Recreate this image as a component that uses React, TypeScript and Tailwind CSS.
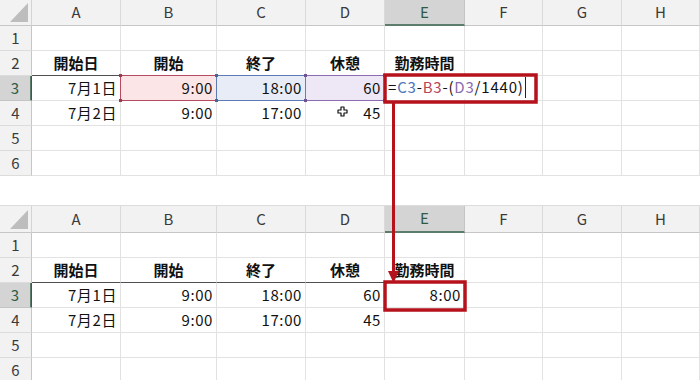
import React from "react";

const COLS = ["A", "B", "C", "D", "E", "F", "G", "H"];
const GRID = "grid grid-cols-[32px_89px_96px_89px_79px_80px_78px_79px_78px]";
const FONT = "font-['Noto_Sans_CJK_JP','Noto_Sans',sans-serif]";

type Ref = { fill: string; line: string };

// Excel-style formula reference colours
const REF_B: Ref = { fill: "bg-[#fbe5e6]", line: "border-[#b84a5f]" };
const REF_C: Ref = { fill: "bg-[#e7ecf7]", line: "border-[#5b7bb4]" };
const REF_D: Ref = { fill: "bg-[#eee8f6]", line: "border-[#8a6bb0]" };

function RefFrame({ line, dot }: { line: string; dot: string }) {
  return (
    <div className={`pointer-events-none absolute -left-px -top-px right-[-1px] bottom-[-1px] z-10 border ${line}`}>
      <span className={`absolute -left-[2px] -top-[2px] h-[3px] w-[3px] ${dot}`} />
      <span className={`absolute -right-[2px] -top-[2px] h-[3px] w-[3px] ${dot}`} />
      <span className={`absolute -left-[2px] -bottom-[2px] h-[3px] w-[3px] ${dot}`} />
      <span className={`absolute -right-[2px] -bottom-[2px] h-[3px] w-[3px] ${dot}`} />
    </div>
  );
}

function Corner() {
  return (
    <div className="relative border-b border-r border-b-[#c6c6c6] border-r-[#d4d4d4] bg-[#f2f2f2]">
      <svg className="absolute right-[2px] bottom-[2px]" width="19" height="20" viewBox="0 0 19 20">
        <polygon points="18,0 18,19 0,19" fill="#bdbdbd" />
      </svg>
    </div>
  );
}

function ColHeader({ label, active }: { label: string; active: boolean }) {
  return (
    <div
      className={`flex items-center justify-center border-r text-[15px] ${
        active
          ? "border-b-2 border-r-[#c4c4c4] border-b-[#5d7d6c] bg-[#d4d4d4] text-[#2e5a44]"
          : "border-b border-r-[#dadada] border-b-[#c6c6c6] bg-[#f2f2f2] text-[#3a3a3a]"
      }`}
    >
      {label}
    </div>
  );
}

function RowHeader({ n, active }: { n: number; active: boolean }) {
  return (
    <div
      className={`flex h-[25px] items-center justify-center border-b text-[15px] ${
        active
          ? "border-r-2 border-b-[#c4c4c4] border-r-[#5d7d6c] bg-[#d4d4d4] text-[#2e5a44]"
          : "border-r border-b-[#dcdcdc] border-r-[#c6c6c6] bg-[#f2f2f2] text-[#3a3a3a]"
      }`}
    >
      {n}
    </div>
  );
}

function Cell({
  children,
  align = "right",
  bold = false,
  darkBottom = false,
  extra = "",
}: {
  children?: React.ReactNode;
  align?: "left" | "center" | "right";
  bold?: boolean;
  darkBottom?: boolean;
  extra?: string;
}) {
  const just =
    align === "center" ? "justify-center" : align === "left" ? "justify-start pl-[3px]" : "justify-end pr-[3px]";
  return (
    <div
      className={`relative flex h-[25px] items-center whitespace-nowrap border-b border-r border-r-[#e2e2e2] text-[15px] text-[#111] ${just} ${
        darkBottom ? "border-b-[#505050]" : "border-b-[#e2e2e2]"
      } ${bold ? "font-bold" : "tracking-[0.6px]"} ${extra}`}
    >
      {children}
    </div>
  );
}

function Empty({ n }: { n: number }) {
  return (
    <>
      {Array.from({ length: n }).map((_, i) => (
        <Cell key={i} />
      ))}
    </>
  );
}

function Formula() {
  return (
    <div className="absolute left-0 top-0 bottom-px z-10 flex items-center bg-white pl-[3px] pr-[14px] text-[15px] tracking-[0.8px] text-[#111]">
      <span>=</span>
      <span className="text-[#4d74b8]">C3</span>
      <span>-</span>
      <span className="text-[#b8465a]">B3</span>
      <span>-(</span>
      <span className="text-[#8a6bb0]">D3</span>
      <span>/1440)</span>
      <span className="ml-[1px] h-[21px] w-px bg-[#222]" />
    </div>
  );
}

function MoveCursor() {
  return (
    <svg className="absolute left-[31px] top-[5px] z-10" width="11" height="11" viewBox="0 0 11 11">
      <path
        d="M4 1h3v3h3v3H7v3H4V7H1V4h3z"
        fill="#fff"
        stroke="#111"
        strokeWidth="1.2"
        strokeLinejoin="round"
      />
    </svg>
  );
}

function Sheet({ editing, headerH }: { editing: boolean; headerH: string }) {
  return (
    <div className={`${GRID} ${FONT} select-none`}>
      {/* column headers */}
      <div className={`col-span-9 ${GRID} ${headerH}`}>
        <Corner />
        {COLS.map((c) => (
          <ColHeader key={c} label={c} active={c === "E"} />
        ))}
      </div>

      {/* row 1 */}
      <RowHeader n={1} active={false} />
      <Empty n={8} />

      {/* row 2 */}
      <RowHeader n={2} active={false} />
      <Cell align="center" bold darkBottom>開始日</Cell>
      <Cell align="center" bold darkBottom>開始</Cell>
      <Cell align="center" bold darkBottom>終了</Cell>
      <Cell align="center" bold darkBottom>休憩</Cell>
      <Cell align="center" bold>勤務時間</Cell>
      <Empty n={3} />

      {/* row 3 */}
      <RowHeader n={3} active />
      <Cell extra="border-l border-l-[#505050] -ml-px">7月1日</Cell>
      {editing ? (
        <>
          <Cell extra={REF_B.fill}>
            <RefFrame line={REF_B.line} dot="bg-[#9c3a4e]" />
            9:00
          </Cell>
          <Cell extra={REF_C.fill}>
            <RefFrame line={REF_C.line} dot="bg-[#45659c]" />
            18:00
          </Cell>
          <Cell extra={REF_D.fill}>
            <RefFrame line={REF_D.line} dot="bg-[#6f5394]" />
            60
          </Cell>
          <Cell>
            <Formula />
          </Cell>
        </>
      ) : (
        <>
          <Cell>9:00</Cell>
          <Cell>18:00</Cell>
          <Cell>60</Cell>
          <Cell>8:00</Cell>
        </>
      )}
      <Empty n={3} />

      {/* row 4 */}
      <RowHeader n={4} active={false} />
      <Cell>7月2日</Cell>
      <Cell>9:00</Cell>
      <Cell>17:00</Cell>
      <Cell>
        {editing && <MoveCursor />}
        45
      </Cell>
      <Empty n={4} />

      {/* rows 5–6 */}
      <RowHeader n={5} active={false} />
      <Empty n={8} />
      <RowHeader n={6} active={false} />
      <Empty n={8} />
    </div>
  );
}

export default function App() {
  return (
    <div className="relative h-[380px] w-[700px] overflow-hidden bg-white">
      <Sheet editing headerH="h-[26px]" />
      <div className="mt-[29px] border-t border-[#dcdcdc]">
        <Sheet editing={false} headerH="h-[27px]" />
      </div>

      {/* callout: formula cell → result cell */}
      <svg
        className="pointer-events-none absolute left-0 top-0 z-20"
        width="700"
        height="380"
        viewBox="0 0 700 380"
      >
        <rect x="385" y="75" width="151" height="27" fill="none" stroke="#b5121b" strokeWidth="3.5" />
        <line x1="393.5" y1="102" x2="393.5" y2="272" stroke="#b5121b" strokeWidth="3" />
        <polygon points="388,271 399,271 393.5,283" fill="#b5121b" />
        <rect x="385" y="282" width="80" height="28" fill="none" stroke="#b5121b" strokeWidth="3.5" />
      </svg>
    </div>
  );
}
